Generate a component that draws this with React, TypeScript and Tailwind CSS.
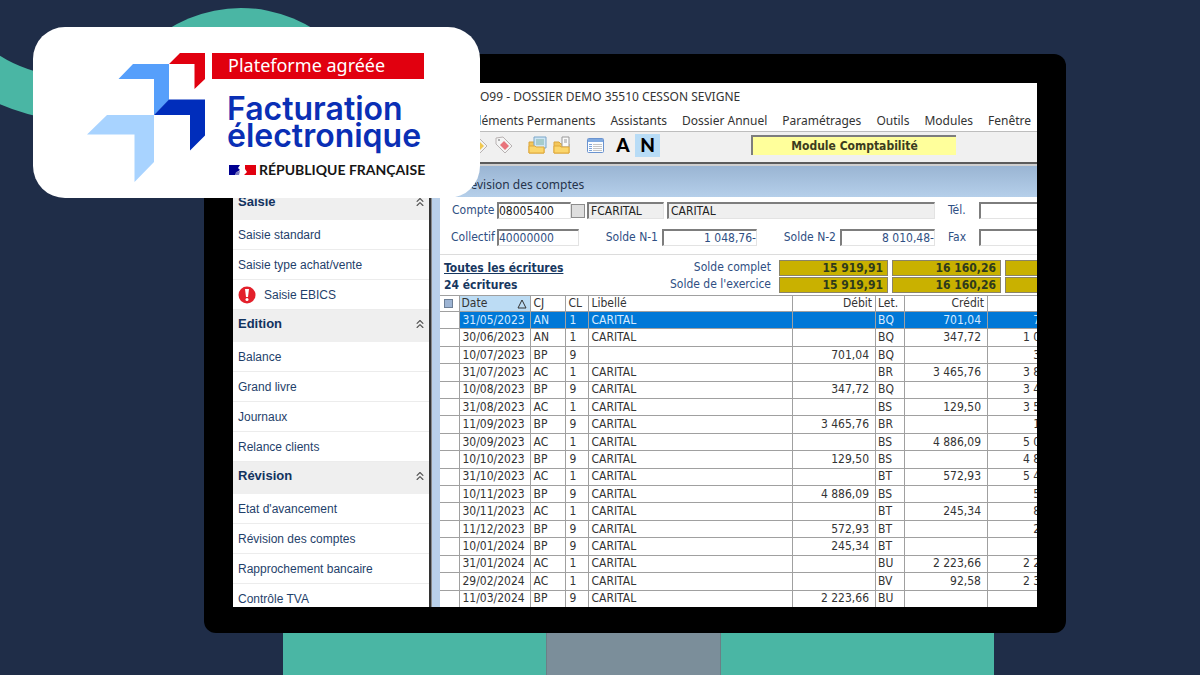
import React from 'react'
import { ChevronsUp } from 'lucide-react'

type Entry = {
    date: string;
    cj: string;
    cl: string;
    libelle: string;
    debit: string;
    lettre: string;
    credit: string;
    solde: string;
}

const entries: Entry[] = [
    { date: '31/05/2023', cj: 'AN', cl: '1', libelle: 'CARITAL', debit: '', lettre: 'BQ', credit: '701,04', solde: '701,04' },
    { date: '30/06/2023', cj: 'AN', cl: '1', libelle: 'CARITAL', debit: '', lettre: 'BQ', credit: '347,72', solde: '1 048,76' },
    { date: '10/07/2023', cj: 'BP', cl: '9', libelle: '', debit: '701,04', lettre: 'BQ', credit: '', solde: '347,72' },
    { date: '31/07/2023', cj: 'AC', cl: '1', libelle: 'CARITAL', debit: '', lettre: 'BR', credit: '3 465,76', solde: '3 813,48' },
    { date: '10/08/2023', cj: 'BP', cl: '9', libelle: 'CARITAL', debit: '347,72', lettre: 'BQ', credit: '', solde: '3 465,76' },
    { date: '31/08/2023', cj: 'AC', cl: '1', libelle: 'CARITAL', debit: '', lettre: 'BS', credit: '129,50', solde: '3 595,26' },
    { date: '11/09/2023', cj: 'BP', cl: '9', libelle: 'CARITAL', debit: '3 465,76', lettre: 'BR', credit: '', solde: '129,50' },
    { date: '30/09/2023', cj: 'AC', cl: '1', libelle: 'CARITAL', debit: '', lettre: 'BS', credit: '4 886,09', solde: '5 015,59' },
    { date: '10/10/2023', cj: 'BP', cl: '9', libelle: 'CARITAL', debit: '129,50', lettre: 'BS', credit: '', solde: '4 886,09' },
    { date: '31/10/2023', cj: 'AC', cl: '1', libelle: 'CARITAL', debit: '', lettre: 'BT', credit: '572,93', solde: '5 459,02' },
    { date: '10/11/2023', cj: 'BP', cl: '9', libelle: 'CARITAL', debit: '4 886,09', lettre: 'BS', credit: '', solde: '572,93' },
    { date: '30/11/2023', cj: 'AC', cl: '1', libelle: 'CARITAL', debit: '', lettre: 'BT', credit: '245,34', solde: '818,27' },
    { date: '11/12/2023', cj: 'BP', cl: '9', libelle: 'CARITAL', debit: '572,93', lettre: 'BT', credit: '', solde: '245,34' },
    { date: '10/01/2024', cj: 'BP', cl: '9', libelle: 'CARITAL', debit: '245,34', lettre: 'BT', credit: '', solde: '' },
    { date: '31/01/2024', cj: 'AC', cl: '1', libelle: 'CARITAL', debit: '', lettre: 'BU', credit: '2 223,66', solde: '2 223,66' },
    { date: '29/02/2024', cj: 'AC', cl: '1', libelle: 'CARITAL', debit: '', lettre: 'BV', credit: '92,58', solde: '2 316,24' },
    { date: '11/03/2024', cj: 'BP', cl: '9', libelle: 'CARITAL', debit: '2 223,66', lettre: 'BU', credit: '', solde: '' },
]

const sections = [
    { title: 'Saisie', items: ['Saisie standard', 'Saisie type achat/vente', 'Saisie EBICS'] },
    { title: 'Edition', items: ['Balance', 'Grand livre', 'Journaux', 'Relance clients'] },
    { title: 'Révision', items: ['Etat d\'avancement', 'Révision des comptes', 'Rapprochement bancaire', 'Contrôle TVA'] },
]

const menus = ['Éléments Permanents', 'Assistants', 'Dossier Annuel', 'Paramétrages', 'Outils', 'Modules', 'Fenêtre']

const field = 'h-[17px] min-w-0 rounded-none border-t-2 border-l-2 border-r border-b border-t-[#7d7d7d] border-l-[#7d7d7d] border-r-[#e3e3e3] border-b-[#e3e3e3] outline-none'

const TagIcon = ({ color }: { color: string }) => (
    <svg width="18" height="18" viewBox="0 0 18 18">
        <path d="M1 2 L8 1 L17 10 L10 17 L1 8 Z" fill="#f4f4f4" stroke="#b8b2b2" />
        <path d="M9 5 L14 10 L10 14 L5 9 Z" fill={color} />
        <circle cx="4" cy="4" r="1" fill="#999" />
    </svg>
)

const FolderIcon = ({ sheet }: { sheet: boolean }) => (
    <svg width="19" height="18" viewBox="0 0 19 18">
        <path d="M1 6 H6 L8 8 H16 V17 H1 Z" fill="#f3c65a" stroke="#d9a43c" />
        {sheet
            ? <path d="M6 1 H18 V12 H6 Z" fill="#cfe6f5" stroke="#7ba6c9" />
            : <path d="M9 1 H16 V11 H9 Z" fill="#fbfbfb" stroke="#9a9a9a" />}
        {sheet
            ? <path d="M8 4 H16 M8 6 H16 M8 8 H16" stroke="#7fb2a4" />
            : <path d="M11 4 H14 M11 6 H14" stroke="#999" fill="none" />}
        <path d="M1 10 H7 L8 11 H16 V17 H1 Z" fill="#fbd66c" stroke="#e0a93a" />
    </svg>
)

const ListIcon = () => (
    <svg width="17" height="15" viewBox="0 0 17 15">
        <rect x="0.5" y="0.5" width="16" height="14" rx="1" fill="#fafdff" stroke="#6a93cf" />
        <rect x="1" y="1" width="15" height="3" fill="#7fa9e0" />
        <path d="M2 6.5 H5 M2 8.5 H5 M2 10.5 H5 M2 12.5 H5" stroke="#7ba3db" />
        <path d="M6 6.5 H15 M6 8.5 H15 M6 10.5 H15 M6 12.5 H15" stroke="#c4c4c4" />
    </svg>
)

const AlertIcon = () => (
    <svg width="18" height="18" viewBox="0 0 18 18">
        <circle cx="9" cy="9" r="8.5" fill="#e3202b" />
        <path d="M7 3 H11 L10 11 H8 Z" fill="#fff" />
        <circle cx="9" cy="13.5" r="1.5" fill="#fff" />
    </svg>
)

const Badge = () => (
    <div className="absolute left-[33px] top-[27px] z-10 flex h-[171px] w-[447px] gap-[7px] rounded-[32px] bg-white pl-[54px] pt-[26px]">
        <svg className="shrink-0" width="118" height="129" viewBox="87 53 118 129">
            <path d="M87 134.5 L107 115 H154 V162 L134.5 182 V134.5 Z" fill="#a8d3ff" />
            <path d="M118.5 79 L133 64 H169 V100 L154 115 V79 Z" fill="#569ffb" />
            <path d="M154 115 L169 99.5 H205 V135.5 L190 150.5 V115 Z" fill="#002dbb" />
            <path d="M169 64 L180 53 H205 V79 L194.5 89 V64 Z" fill="#e1000f" />
        </svg>
        <div className="flex w-[212px] flex-col">
            <p className="h-[26px] bg-[#e1000f] pl-4 font-['Noto_Sans',sans-serif] text-[18px] leading-[24px] text-white">
                Plateforme agréée
            </p>
            <h1 className="mt-4 whitespace-nowrap pl-[15px] font-[Inter,sans-serif] text-[32px] font-semibold leading-[27px] text-[#0a2fb5]">
                Facturation<br />électronique
            </h1>
            <div className="mt-3 flex items-center gap-[3px] pl-[17px]">
                <svg className="shrink-0" width="27" height="10" viewBox="0 0 27 10">
                    <path d="M0 0 H11 L9 3 L11 5 L8 7 L6 10 H0 Z" fill="#000091" />
                    <path d="M7 7 L11 6 L10 10 H6 Z" fill="#7a7ac0" />
                    <path d="M16 0 H27 V10 H15 L18 7 L16 4 Z" fill="#e1000f" />
                </svg>
                <span className="whitespace-nowrap font-[Lato,sans-serif] text-[14px] font-bold leading-[18px] text-[#161616]">RÉPUBLIQUE FRANÇAISE</span>
            </div>
        </div>
    </div>
)

const Sidebar = () => (
    <nav className="w-[196px] shrink-0 overflow-hidden bg-white pt-[24px] font-['Liberation_Sans',sans-serif] text-[12px] text-[#1f3f6b]">
        {sections.map((section) => (
            <div key={section.title}>
                <button className="flex h-8 w-full items-center justify-between bg-[#efefef] pb-1 pl-[5px] pr-[2px] text-[13px] font-bold text-[#12335f]">
                    {section.title}
                    <ChevronsUp size={14} strokeWidth={2} className="text-[#555]" />
                </button>
                {section.items.map((item) => (
                    <a key={item} href="#" className="flex h-[30px] items-center gap-2 border-b border-[#ececec] pl-[5px]">
                        {item === 'Saisie EBICS' && <AlertIcon />}
                        {item}
                    </a>
                ))}
            </div>
        ))}
    </nav>
)

const AccountForm = () => (
    <form className="flex flex-col gap-[10px] border-b border-[#dcdcdc] pb-2 pt-[5px] text-[12px] leading-[17px] text-[#2f4f83]">
        <div className="flex">
            <label htmlFor="compte" className="w-[57px] shrink-0 pl-3">Compte</label>
            <input id="compte" defaultValue="08005400" className={`${field} w-[74px] bg-white text-[#222]`} />
            <button type="button" aria-label="Rechercher" className="mr-[2px] mt-[2px] h-[14px] w-[14px] shrink-0 border border-[#8d8d8d] bg-[#dedede]"></button>
            <input aria-label="Code" defaultValue="FCARITAL" readOnly className={`${field} mr-[3px] w-[77px] bg-[#efefef] pl-[2px] text-[#222]`} />
            <input aria-label="Nom" defaultValue="CARITAL" readOnly className={`${field} flex-1 bg-[#efefef] pl-[2px] text-[#222]`} />
            <label htmlFor="tel" className="w-11 shrink-0 pl-[13px]">Tél.</label>
            <input id="tel" className={`${field} w-[58px] border-r-0 bg-white`} />
        </div>
        <div className="flex">
            <label htmlFor="collectif" className="w-[57px] shrink-0 pl-[11px]">Collectif</label>
            <input id="collectif" defaultValue="40000000" className={`${field} w-[82px] bg-white`} />
            <label htmlFor="solde1" className="w-[83px] shrink-0 pr-1 text-right">Solde N-1</label>
            <input id="solde1" defaultValue="1 048,76-" className={`${field} w-[95px] bg-white text-right`} />
            <label htmlFor="solde2" className="flex-1 pr-1 text-right">Solde N-2</label>
            <input id="solde2" defaultValue="8 010,48-" className={`${field} w-[95px] bg-white text-right`} />
            <label htmlFor="fax" className="w-11 shrink-0 pl-[13px]">Fax</label>
            <input id="fax" className={`${field} w-[58px] border-r-0 bg-white`} />
        </div>
    </form>
)

const TotalLine = ({ label }: { label: string }) => (
    <div className="flex h-4 gap-1 text-[12px] leading-[14px]">
        <span className="mr-1 flex-1 text-right text-[#2f4f83]">{label}</span>
        <span className="w-[109px] border border-[#8a8468] bg-[#c9b100] pr-1 text-right font-bold text-[#2e3a1c]">15 919,91</span>
        <span className="w-[109px] border border-[#8a8468] bg-[#c9b100] pr-1 text-right font-bold text-[#2e3a1c]">16 160,26</span>
        <span className="w-8 border border-r-0 border-[#8a8468] bg-[#c9b100]"></span>
    </div>
)

const EntriesTable = () => (
    <div className="overflow-hidden">
        <table className="h-[313px] w-[calc(100%+41px)] table-fixed border-collapse text-[12px] leading-[15px] text-[#333]">
            <colgroup>
                <col className="w-[19px]" />
                <col className="w-[71px]" />
                <col className="w-[35px]" />
                <col className="w-[23px]" />
                <col />
                <col className="w-[83px]" />
                <col className="w-[29px]" />
                <col className="w-[83px]" />
                <col className="w-[90px]" />
            </colgroup>
            <thead>
                <tr className="border-y border-[#a0a0a0] text-left [&>th]:border-r [&>th]:border-[#a0a0a0] [&>th]:p-0 [&>th]:font-normal">
                    <th><span className="ml-1 block size-[9px] border border-[#6d7f96] bg-[#9db4d3]"></span></th>
                    <th className="bg-[#bcdcf4]">
                        <span className="flex items-center justify-between pl-[2px] pr-[3px]">
                            Date
                            <svg width="10" height="10" viewBox="0 0 10 10"><path d="M5 1 L9 9 H1 Z" fill="none" stroke="#333" /></svg>
                        </span>
                    </th>
                    <th><span className="pl-[3px]">CJ</span></th>
                    <th><span className="pl-[3px]">CL</span></th>
                    <th><span className="pl-[3px]">Libellé</span></th>
                    <th className="text-right"><span className="pr-[3px]">Débit</span></th>
                    <th><span className="pl-[2px]">Let.</span></th>
                    <th className="text-right"><span className="pr-[3px]">Crédit</span></th>
                    <th></th>
                </tr>
            </thead>
            <tbody>
                {entries.map((entry, index) => (
                    <tr
                        key={entry.date}
                        className={`border-b border-[#a0a0a0] [&>td]:border-r [&>td]:border-[#a0a0a0] [&>td]:py-0 [&>td]:whitespace-nowrap ${index === 0 ? 'text-[#d5ebff] [&>td+td]:bg-[#0078d7]' : ''}`}
                    >
                        <td></td>
                        <td className="pl-[3px]">{entry.date}</td>
                        <td className="pl-[3px]">{entry.cj}</td>
                        <td className="pl-1">{entry.cl}</td>
                        <td className="pl-[3px]">{entry.libelle}</td>
                        <td className="pr-[6px] text-right">{entry.debit}</td>
                        <td className="pl-[2px]">{entry.lettre}</td>
                        <td className="pr-[6px] text-right">{entry.credit}</td>
                        <td className="pr-[6px] text-right">{entry.solde}</td>
                    </tr>
                ))}
            </tbody>
        </table>
    </div>
)

const App = () => {
    return (
    <div className="relative flex h-screen flex-col overflow-hidden bg-[#1f2d48] pt-[54px]">
        {/* Wave behind the badge */}
        <svg className="absolute left-0 top-0" width="480" height="150" viewBox="0 0 480 150">
            <path d="M-20 68 Q10 91 60 99" fill="none" stroke="#4ab6a4" strokeWidth="43" />
            <circle cx="241" cy="145" r="137" fill="#4ab6a4" />
        </svg>
        <Badge />

        {/* Monitor */}
        <div className="relative ml-[204px] mr-[134px] flex min-h-0 flex-1 flex-col rounded-xl bg-black px-[29px] pb-[26px] pt-[29px]">
            <main className="flex min-h-0 flex-1 flex-col overflow-hidden bg-white font-['DejaVu_Sans_Condensed','Noto_Sans',sans-serif]">
                <header className="font-['Noto_Sans',sans-serif] text-[12px] text-[#333]">
                    <p className="h-7 pl-[247px] leading-[28px]">O99 - DOSSIER DEMO 35510 CESSON SEVIGNE</p>
                    <div className="flex h-5 justify-end gap-[15px] whitespace-nowrap pr-[6px] leading-[18px]">
                        {menus.map((menu) => (
                            <button key={menu}>{menu}</button>
                        ))}
                    </div>
                </header>

                <div className="flex h-[33px] shrink-0 items-center border-b-2 border-t border-b-[#5c5c5c] border-t-[#bdbdbd] bg-[#f0f0f0] pb-1 pl-[237px]">
                    <button aria-label="Étiquette" className="mr-[7px]"><TagIcon color="#f0c850" /></button>
                    <button aria-label="Supprimer l'étiquette" className="mr-[15px]"><TagIcon color="#e8737b" /></button>
                    <button aria-label="Dossier" className="mr-[6px]"><FolderIcon sheet={true} /></button>
                    <button aria-label="Ouvrir" className="mr-[15px]"><FolderIcon sheet={false} /></button>
                    <button aria-label="Liste" className="mr-2"><ListIcon /></button>
                    <button className="w-[22px] font-[Lato,sans-serif] text-[19px] font-black leading-[22px] text-black">A</button>
                    <button className="ml-px h-[23px] w-[25px] bg-[#b8dcf6] font-[Lato,sans-serif] text-[19px] font-black leading-[22px] text-black">N</button>
                    <p className="ml-auto mr-[81px] h-5 w-[205px] border-l-2 border-t-2 border-[#7d7d7d] bg-[#ffff9b] text-center text-[12px] font-bold leading-[18px] text-[#3c3c1e]">
                        Module Comptabilité
                    </p>
                </div>

                <div className="flex min-h-0 flex-1">
                    <Sidebar />
                    <div className="w-[3px] shrink-0 border-r border-[#8a8a8a] bg-[#333]"></div>
                    <div className="w-2 shrink-0 bg-[#bad0e9]"></div>
                    <section className="min-w-0 flex-1">
                        <h2 className="h-[33px] border-t-2 border-[#cfcfcf] bg-linear-to-b from-[#9ab5d3] to-[#b5cfea] pl-[23px] font-['Noto_Sans',sans-serif] text-[12px] leading-[38px] text-[#26344c]">
                            Révision des comptes
                        </h2>
                        <AccountForm />
                        <div className="flex pb-px pt-[5px]">
                            <div className="whitespace-nowrap pl-1 text-[12px] font-bold leading-[17px] text-[#17375f]">
                                <a href="#" className="block underline">Toutes les écritures</a>
                                <p>24 écritures</p>
                            </div>
                            <div className="flex flex-1 flex-col gap-px">
                                <TotalLine label="Solde complet" />
                                <TotalLine label="Solde de l'exercice" />
                            </div>
                        </div>
                        <EntriesTable />
                    </section>
                </div>
            </main>
        </div>

        {/* Monitor stand */}
        <div className="ml-[283px] mr-[206px] flex h-[42px] justify-center bg-[#4ab6a4] pr-[10px]">
            <div className="w-[175px] border-x border-[#6b7f86] bg-[#7b8e9a]"></div>
        </div>
    </div>
    )
}

export default App
